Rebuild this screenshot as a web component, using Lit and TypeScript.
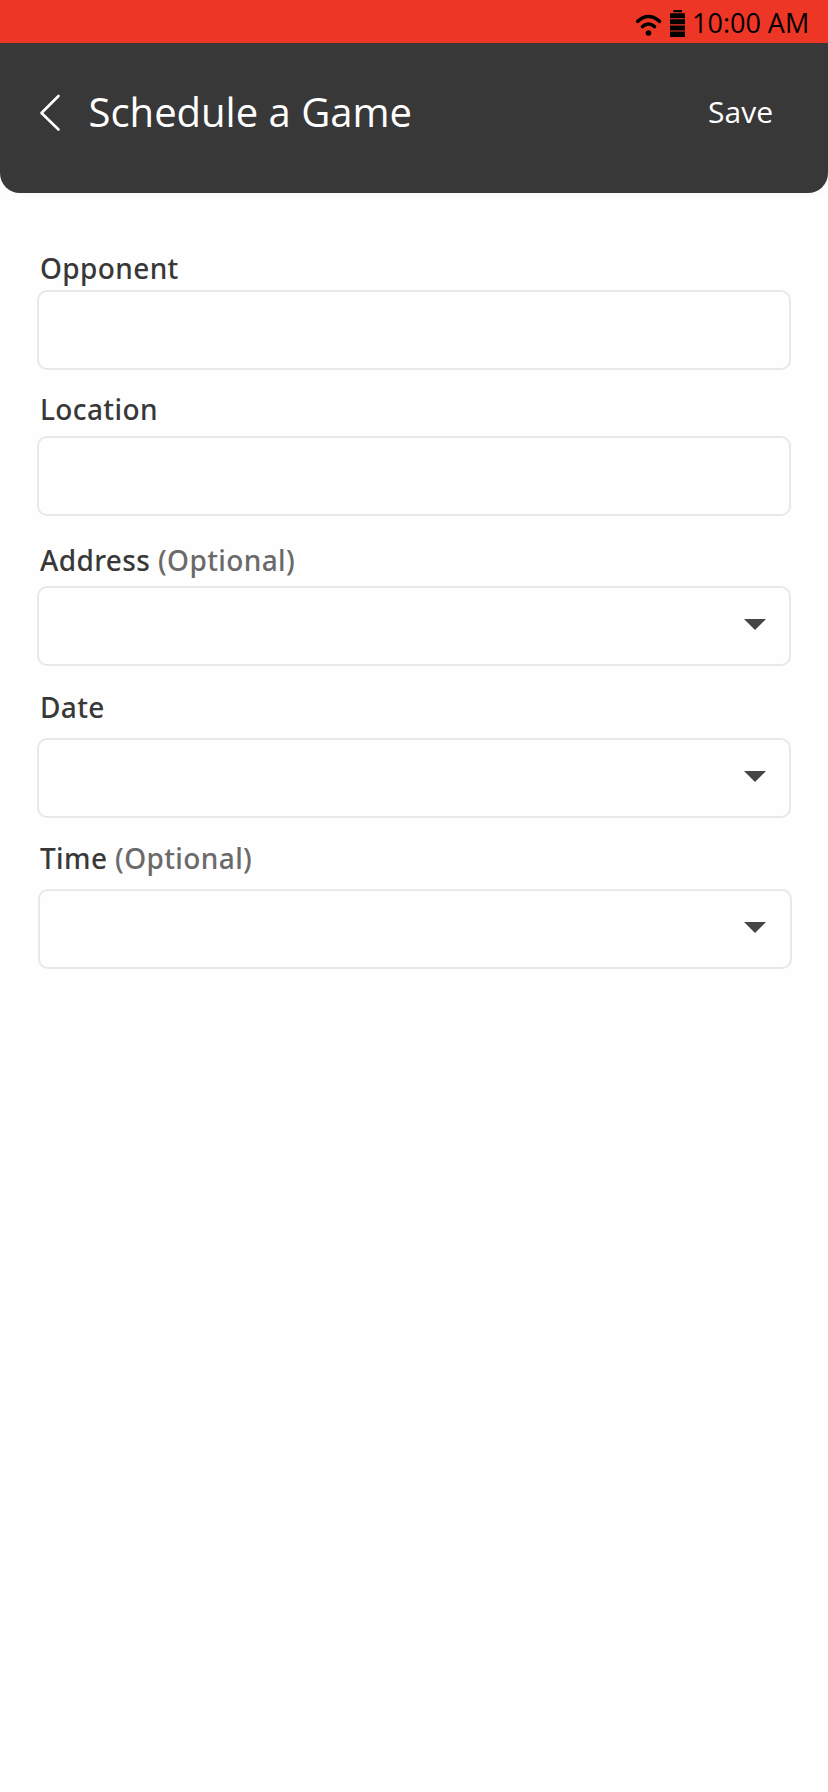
import { LitElement, html, css, nothing } from "lit";
import { customElement } from "lit/decorators.js";
import { classMap } from "lit/directives/class-map.js";

interface Field {
  id: string;
  label: string;
  optional?: boolean;
  picker?: boolean;
}

const FIELDS: Field[] = [
  { id: "opponent", label: "Opponent" },
  { id: "location", label: "Location" },
  { id: "address", label: "Address", optional: true, picker: true },
  { id: "date", label: "Date", picker: true },
  { id: "time", label: "Time", optional: true, picker: true },
];

@customElement("app-root")
export class AppRoot extends LitElement {
  static styles = css`
    :host {
      display: flex;
      flex-direction: column;
      min-height: 1792px;
      box-sizing: border-box;
      background: #fefefe;
      font-family: "Open Sans", "Noto Sans", sans-serif;
    }
    .status {
      display: flex;
      height: 43px;
      background: #ee3626;
      color: #000;
      justify-content: flex-end;
      align-items: flex-start;
      padding-right: 19px;
    }
    .status svg {
      display: block;
      flex: none;
    }
    .clock {
      width: 117px;
      margin-left: 6px;
      padding-top: 5px;
      font-size: 27px;
      font-weight: 400;
      line-height: 36px;
      white-space: nowrap;
    }
    .header {
      display: flex;
      height: 150px;
      box-sizing: border-box;
      background: #383838;
      color: #fff;
      border-radius: 0 0 20px 20px;
      box-shadow: 0 3px 6px rgba(0, 0, 0, 0.02);
      padding: 0 55px 0 38px;
      align-items: flex-start;
    }
    .back {
      display: block;
      margin-top: 50px;
    }
    .title {
      margin: 42px auto 0 26.5px;
      font-size: 40px;
      font-weight: 400;
      line-height: 54px;
      white-space: nowrap;
    }
    .save {
      margin-top: 49px;
      font-size: 30px;
      line-height: 40px;
    }
    .form {
      display: flex;
      flex-direction: column;
      padding: 56px 37px 0;
    }
    .label {
      padding-left: 3px;
      font-family: "Noto Sans", sans-serif;
      font-size: 28px;
      font-weight: 500;
      line-height: 38px;
      letter-spacing: 0.38px;
      color: #383838;
      white-space: nowrap;
    }
    .optional {
      color: #6a6a6a;
    }
    .box {
      display: flex;
      box-sizing: border-box;
      height: 80px;
      border: 2px solid #e8e8e8;
      border-radius: 10px;
      background: #fefefe;
      justify-content: flex-end;
      padding: 31px 23px 0 0;
    }
    .opponent {
      padding-bottom: 20px;
    }
    .opponent .box {
      margin-top: 3px;
    }
    .location {
      padding-bottom: 25px;
    }
    .location .box {
      margin-top: 8px;
    }
    .address {
      padding-bottom: 22px;
    }
    .address .box {
      margin-top: 7px;
    }
    .date {
      padding-bottom: 21px;
    }
    .date .box {
      margin-top: 12px;
    }
    .time .box {
      margin: 12px -1px 0 1px;
      padding-right: 24px;
    }
  `;

  private renderField(f: Field) {
    return html`
      <div class=${classMap({ field: true, [f.id]: true })}>
        <div class="label">${f.label}${f.optional ? html` <span class="optional">(Optional)</span>` : nothing}</div>
        <div class="box">
          ${f.picker
            ? html`<svg width="22" height="11" viewBox="0 0 22 11"><path d="M0 0H22L11 11Z" fill="#454545" /></svg>`
            : nothing}
        </div>
      </div>
    `;
  }

  render() {
    return html`
      <div class="status">
        <svg width="52" height="43" viewBox="0 0 52 43">
          <g fill="none" stroke="#000" stroke-width="3.4" stroke-linecap="round">
            <path d="M3.6 21.4Q14.5 11.8 25.6 21.4" />
            <path d="M8.4 26.6Q14.5 21.4 20.6 26.6" />
          </g>
          <circle cx="14.5" cy="33" r="2.8" />
          <path d="M39.3 10h8.7v2.2h-8.7zM36 13.2h15v5.1H36zM36 19.3h15v5H36zM36 25.4h15v5H36zM36 31.6h15v5.4H36z" />
        </svg>
        <div class="clock">10:00 AM</div>
      </div>
      <div class="header">
        <svg class="back" width="24" height="40" viewBox="0 0 24 40" fill="none" stroke="#fff" stroke-width="2.6" stroke-linecap="round" stroke-linejoin="round">
          <path d="M20.5 3L3.5 20L20.5 36.5" />
        </svg>
        <h1 class="title">Schedule a Game</h1>
        <div class="save">Save</div>
      </div>
      <div class="form">${FIELDS.map((f) => this.renderField(f))}</div>
    `;
  }
}
